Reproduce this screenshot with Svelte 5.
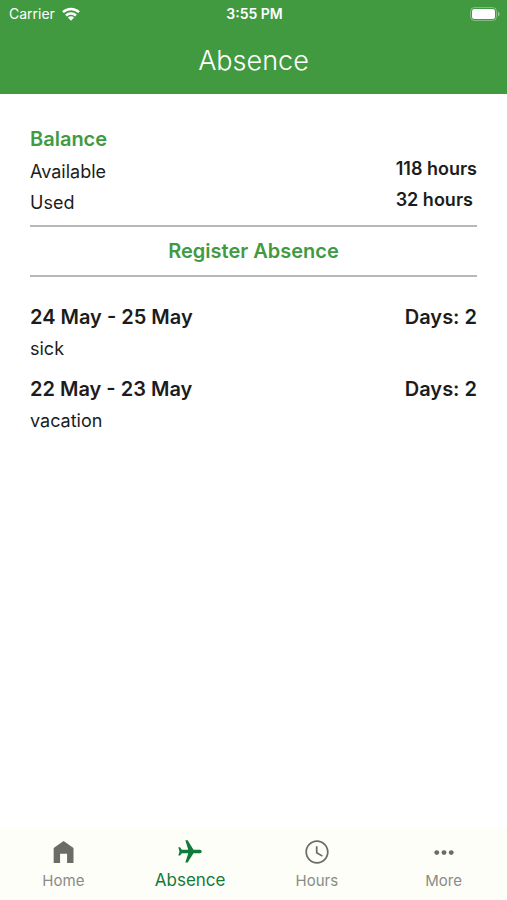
<script lang="ts">
  interface Absence {
    period: string;
    days: number;
    reason: string;
  }

  const balance = [
    { label: 'Available', hours: 118 },
    { label: 'Used', hours: 32 },
  ];

  const absences: Absence[] = [
    { period: '24 May - 25 May', days: 2, reason: 'sick' },
    { period: '22 May - 23 May', days: 2, reason: 'vacation' },
  ];

  const tabs = ['Home', 'Absence', 'Hours', 'More'];
  let active = $state('Absence');
</script>

<div class="app">
  <header>
    <div class="status">
      <div class="carrier">
        <span>Carrier</span>
        <svg width="18" height="14" viewBox="0 0 18 14" aria-hidden="true">
          <g fill="none" stroke="#fff" stroke-width="2.5">
            <path d="M1 5.2a11.4 11.4 0 0 1 16 0" />
            <path d="M4 8.5a7.2 7.2 0 0 1 10 0" />
          </g>
          <path d="M5.9 10.6a4.5 4.5 0 0 1 6.2 0L9 13.8z" fill="#fff" />
        </svg>
      </div>
      <time>3:55 PM</time>
      <svg class="battery" width="30" height="14" viewBox="0 0 30 14" aria-hidden="true">
        <rect x="0.5" y="0.5" width="26" height="13" rx="4" fill="none" stroke="#fff" stroke-opacity="0.35" />
        <rect x="2" y="2" width="23" height="10" rx="2.5" fill="#fff" />
        <path d="M28 4.7c2 .7 2 3.9 0 4.6z" fill="#fff" fill-opacity="0.45" />
      </svg>
    </div>
    <h1>Absence</h1>
  </header>

  <main>
    <h2>Balance</h2>
    <dl>
      {#each balance as row}
        <dt>{row.label}</dt>
        <dd>{row.hours} hours</dd>
      {/each}
    </dl>

    <button class="register" type="button">Register Absence</button>

    <ul>
      {#each absences as absence}
        <li>
          <div class="period">
            <span>{absence.period}</span>
            <span>Days: {absence.days}</span>
          </div>
          <p>{absence.reason}</p>
        </li>
      {/each}
    </ul>
  </main>

  <nav>
    {#each tabs as tab}
      <button type="button" class="tab" class:active={active === tab} onclick={() => (active = tab)}>
        <svg width="28" height="28" viewBox="0 0 24 24" fill="currentColor" aria-hidden="true">
          {#if tab === 'Home'}
            <path d="M12.500 2.500 4 8.500V21.500h5.500v-8H15.500v8H21V8.500z" />
          {:else if tab === 'Absence'}
            <path transform="rotate(90 12 12)" d="M21 16v-2l-8-5V3.5c0-.83-.67-1.5-1.5-1.5S10 2.67 10 3.5V9l-8 5v2l8-2.5V19l-2 1.5V22l3.5-1 3.5 1v-1.5L13 19v-5.5l8 2.5z" />
          {:else if tab === 'Hours'}
            <path d="M11.99 2C6.47 2 2 6.48 2 12s4.47 10 9.99 10C17.52 22 22 17.52 22 12S17.52 2 11.99 2zM12 20.5c-4.7 0-8.5-3.8-8.5-8.5S7.300 3.500 12 3.500s8.500 3.800 8.500 8.500-3.800 8.500-8.500 8.500zm.5-13.500H11v6l5.250 3.150.75-1.230-4.500-2.670z" />
          {:else}
            <circle cx="5.8" cy="12.5" r="2.1" />
            <circle cx="12" cy="12.5" r="2.1" />
            <circle cx="18.2" cy="12.5" r="2.1" />
          {/if}
        </svg>
        <span>{tab}</span>
      </button>
    {/each}
  </nav>
</div>

<style>
  :global(body) {
    margin: 0;
    background: #fff;
  }
  .app {
    display: flex;
    flex-direction: column;
    min-height: 100vh;
    font-family: Inter, 'Liberation Sans', sans-serif;
    font-size: 18px;
    color: #1c1c1c;
  }
  header {
    background: #429a40;
    color: #fff;
  }
  .status {
    display: grid;
    grid-template-columns: 1fr auto 1fr;
    align-items: center;
    height: 27px;
    padding: 0 7px 0 9px;
    font-size: 14px;
  }
  .carrier {
    display: flex;
    align-items: center;
    gap: 7px;
  }
  time {
    font-weight: 600;
  }
  .battery {
    justify-self: end;
  }
  h1 {
    margin: 0;
    font-size: 27px;
    font-weight: 300;
    line-height: 67px;
    text-align: center;
  }
  main {
    flex: 1;
    padding: 28px 30px;
  }
  h2 {
    margin: 0;
    font-size: 20px;
    font-weight: 600;
    line-height: 34px;
    color: #429a40;
  }
  dl {
    display: grid;
    grid-template-columns: 1fr auto;
    margin: 0;
    padding-bottom: 7px;
  }
  dt {
    line-height: 31px;
  }
  dd {
    margin: 0;
    font-weight: 600;
    line-height: 26px;
  }
  .register {
    display: block;
    width: 100%;
    padding: 0;
    border: solid #b8b8b8;
    border-width: 2px 0;
    background: none;
    font: inherit;
    font-size: 20px;
    font-weight: 600;
    line-height: 48px;
    color: #429a40;
    cursor: pointer;
  }
  ul {
    margin: 0;
    padding: 24px 0 0;
    list-style: none;
  }
  li {
    padding-bottom: 8px;
  }
  .period {
    display: flex;
    justify-content: space-between;
    font-size: 20px;
    font-weight: 600;
    line-height: 32px;
  }
  p {
    margin: 0;
    line-height: 32px;
  }
  nav {
    display: flex;
    background: #fdfef8;
  }
  .tab {
    display: flex;
    flex: 1;
    flex-direction: column;
    align-items: center;
    padding: 10px 0 4px;
    border: 0;
    background: none;
    font: inherit;
    font-size: 15px;
    line-height: 30px;
    color: #8a8b87;
    cursor: pointer;
  }
  .tab svg {
    color: #6b6c68;
  }
  .tab.active,
  .tab.active svg {
    color: #107a3a;
  }
  .tab.active {
    font-size: 17px;
    line-height: 28px;
  }
</style>
